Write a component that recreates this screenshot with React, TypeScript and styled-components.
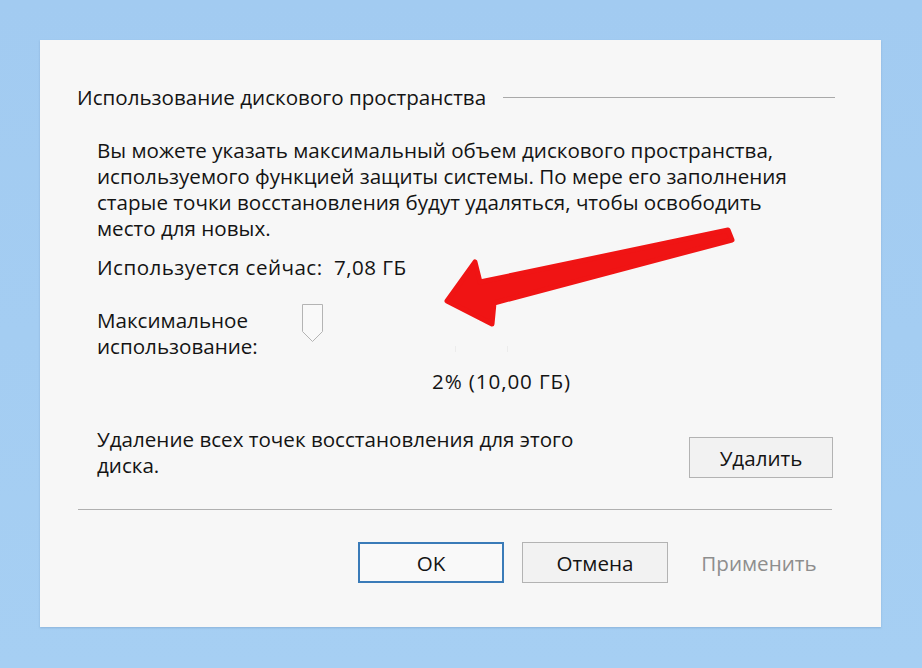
import React from "react";
import styled, { createGlobalStyle } from "styled-components";

const GlobalStyle = createGlobalStyle`
  html, body {
    margin: 0;
    padding: 0;
    background: #a4cdf2;
  }
  body {
    font-family: "Open Sans", "Noto Sans", sans-serif;
    color: #141414;
  }
`;

const Page = styled.div`
  width: 922px;
  height: 668px;
  padding: 40px 0 0 40px;
  box-sizing: border-box;
  background: linear-gradient(180deg, #a2cbf1 0%, #a6cff3 100%);
`;

const Panel = styled.div`
  position: relative;
  width: 841px;
  height: 587px;
  box-sizing: border-box;
  padding: 44px 46px 0 37px;
  background: #f7f7f7;
  box-shadow: 0 1px 2px rgba(90, 130, 170, 0.35);
  display: flex;
  flex-direction: column;
  font-size: 20.6px;
  line-height: 26px;
`;

const GroupHeader = styled.div`
  display: flex;
  align-items: center;
  gap: 17px;
`;

const GroupTitle = styled.span`
  white-space: nowrap;
`;

const GroupLine = styled.div`
  flex: 1;
  height: 1px;
  background: #a9a9a9;
`;

const GroupBody = styled.div`
  padding-left: 20px;
  display: flex;
  flex-direction: column;
`;

const Text = styled.p<{ $top: number }>`
  margin: ${(p) => p.$top}px 0 0;
  white-space: pre-line;
`;

const Wide = styled.span`
  letter-spacing: 0.45px;
`;

const SliderRow = styled.div`
  display: flex;
  margin-top: 27px;
`;

const SliderLabel = styled.div`
  width: 204px;
  flex: none;
`;

const SliderTrack = styled.div`
  position: relative;
  flex: 1;
  height: 44px;
  margin-top: -3px;
`;

const Thumb = styled.svg`
  position: absolute;
  left: 0;
  top: 0;
`;

const Tick = styled.div<{ $x: number }>`
  position: absolute;
  left: ${(p) => p.$x}px;
  top: 42px;
  width: 1px;
  height: 6px;
  background: #ececec;
`;

const Value = styled.div`
  margin: 9px 0 0 335px;
  letter-spacing: 0.9px;
`;

const DeleteRow = styled.div`
  display: flex;
  justify-content: space-between;
  align-items: flex-start;
  margin-top: 32px;
`;

const Button = styled.button<{ $primary?: boolean; $flat?: boolean }>`
  width: 146px;
  height: 41px;
  box-sizing: border-box;
  font-family: inherit;
  font-size: 20.6px;
  color: ${(p) => (p.$flat ? "#8e8e8e" : "#141414")};
  background: ${(p) => (p.$flat ? "transparent" : p.$primary ? "#f9f9f9" : "#f2f2f2")};
  border: ${(p) =>
    p.$flat ? "1px solid transparent" : p.$primary ? "2px solid #3a7bb8" : "1px solid #b3b3b3"};
  padding: 0;
`;

const DeleteButton = styled(Button)`
  width: 144px;
  margin: 11px 2px 0 0;
`;

const Separator = styled.div`
  height: 1px;
  background: #b0b0b0;
  margin: 31px 3px 0 1px;
`;

const Footer = styled.div`
  display: flex;
  justify-content: flex-end;
  gap: 18px;
  margin: 32px 3px 0 0;
`;

const Arrow = styled.svg`
  position: absolute;
  left: 0;
  top: 0;
  overflow: visible;
  pointer-events: none;
`;

export default function App() {
  return (
    <>
      <GlobalStyle />
      <Page>
        <Panel>
          <GroupHeader>
            <GroupTitle>Использование дискового пространства</GroupTitle>
            <GroupLine />
          </GroupHeader>
          <GroupBody>
            <Text $top={27}>
              {"Вы можете указать максимальный объем дискового пространства,\nиспользуемого функцией защиты системы. По мере его заполнения\nстарые точки восстановления будут удаляться, чтобы освободить\nместо для новых."}
            </Text>
            <Text $top={13}>
              <Wide>Используется сейчас:&nbsp; 7,08 ГБ</Wide>
            </Text>
            <SliderRow>
              <SliderLabel>
                Максимальное
                <br />
                использование:
              </SliderLabel>
              <SliderTrack>
                <Thumb width="24" height="40" viewBox="0 0 24 40">
                  <path d="M1.5 0.5 H21.5 V27.5 L11.5 37.5 L1.5 27.5 Z" fill="#f9f9f9" stroke="#b4b4b4" />
                </Thumb>
                <Tick $x={154} />
                <Tick $x={206} />
              </SliderTrack>
            </SliderRow>
            <Value>2% (10,00 ГБ)</Value>
            <DeleteRow>
              <Text $top={0}>{"Удаление всех точек восстановления для этого\nдиска."}</Text>
              <DeleteButton>Удалить</DeleteButton>
            </DeleteRow>
          </GroupBody>
          <Separator />
          <Footer>
            <Button $primary>OK</Button>
            <Button>Отмена</Button>
            <Button $flat>Применить</Button>
          </Footer>
          <Arrow width="841" height="587">
            <path
              d="M407 261 L435 222 L440 242 L688 190 L692 200 L454 263 L452 284 Z"
              fill="#f01414"
              stroke="#f01414"
              strokeWidth="5"
              strokeLinejoin="round"
            />
          </Arrow>
        </Panel>
      </Page>
    </>
  );
}
